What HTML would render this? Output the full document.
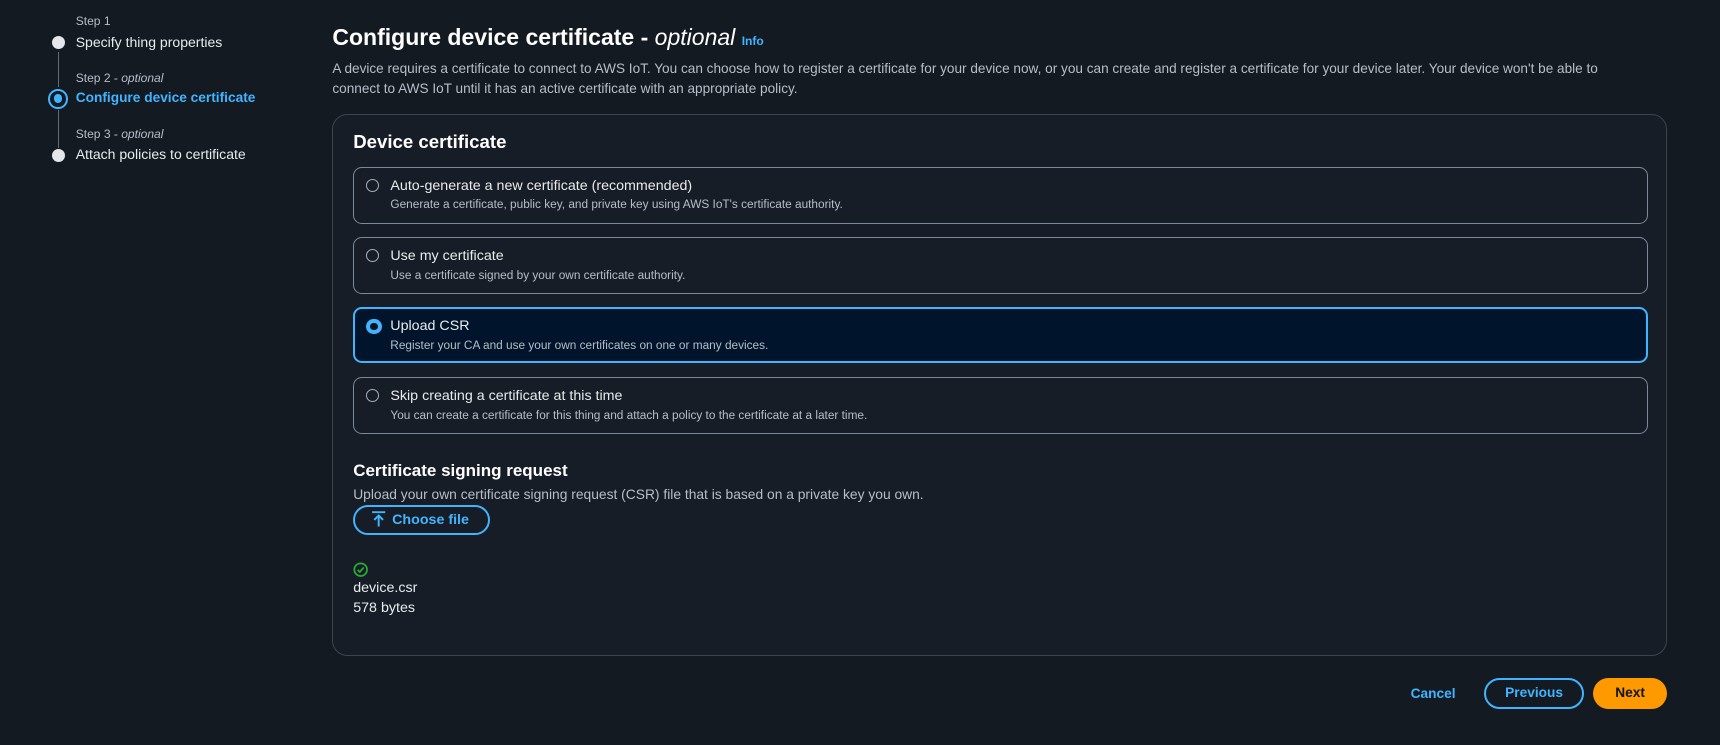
<!DOCTYPE html>
<html><head><meta charset="utf-8"><style>
html,body{margin:0;padding:0;background:#131a22;}
body{width:1720px;height:745px;overflow:hidden;font-family:"Liberation Sans",sans-serif;}
#w{zoom:1.09694;width:1568px;height:679px;position:relative;color:#dfe3e8;}
.a{position:absolute;white-space:nowrap;}
.dot{position:absolute;width:12px;height:12px;border-radius:50%;background:#e4e6ea;}
.line{position:absolute;left:52.5px;width:1.5px;background:#5f6b7a;}
.sl{font-size:11px;color:#b6bec9;}
.st{font-size:12.8px;color:#e9ebed;}
.card{position:absolute;left:322px;width:1180px;border:1px solid #7d8998;border-radius:8px;box-sizing:border-box;}
.card .r{position:absolute;left:11px;top:10px;width:12px;height:12px;border:1.5px solid #a6b0bc;border-radius:50%;box-sizing:border-box;}
.card .t{position:absolute;left:33px;top:9px;font-size:13px;color:#e9ebed;}
.card .d{position:absolute;left:33px;top:27px;font-size:10.8px;color:#b6bec9;}
.btn{position:absolute;border:2px solid #42b4ff;border-radius:16px;box-sizing:border-box;color:#42b4ff;font-weight:bold;font-size:13px;text-align:center;}
</style></head><body><div id="w">
<div class="a sl" style="left:69px;top:13px">Step 1</div>
<div class="dot" style="left:47px;top:33px"></div>
<div class="a st" style="left:69px;top:31px">Specify thing properties</div>
<div class="line" style="top:47px;height:32px"></div>
<div class="a sl" style="left:69px;top:65px">Step 2 - <i>optional</i></div>
<div class="a" style="left:44px;top:81px;width:18px;height:18px;border-radius:50%;border:2px solid #42b4ff;box-sizing:border-box"><div style="position:absolute;left:3px;top:3px;width:8px;height:8px;border-radius:50%;background:#42b4ff"></div></div>
<div class="a st" style="left:69px;top:82px;color:#42b4ff;font-weight:bold;font-size:12.5px">Configure device certificate</div>
<div class="line" style="top:100px;height:35px"></div>
<div class="a sl" style="left:69px;top:116px">Step 3 - <i>optional</i></div>
<div class="dot" style="left:47px;top:136px"></div>
<div class="a st" style="left:69px;top:133px">Attach policies to certificate</div>

<div class="a" style="left:303px;top:22px;font-size:21px;font-weight:bold;color:#fff">Configure device certificate - <i style="font-weight:normal">optional</i> <span style="font-size:11px;color:#42b4ff;font-weight:bold">Info</span></div>
<div class="a" style="left:303px;top:54px;font-size:12.4px;color:#b6bec9;line-height:18px;white-space:normal;width:1200px">A device requires a certificate to connect to AWS IoT. You can choose how to register a certificate for your device now, or you can create and register a certificate for your device later. Your device won't be able to connect to AWS IoT until it has an active certificate with an appropriate policy.</div>

<div class="a" style="left:303px;top:104px;width:1217px;height:494px;background:#171d27;border:1px solid #3c4450;border-radius:14px;box-sizing:border-box"></div>
<div class="a" style="left:322px;top:119px;font-size:17px;font-weight:bold;color:#fff">Device certificate</div>
<div class="card" style="top:152px;height:52px"><div class="r"></div><div class="t">Auto-generate a new certificate (recommended)</div><div class="d">Generate a certificate, public key, and private key using AWS IoT's certificate authority.</div></div>
<div class="card" style="top:216px;height:52px"><div class="r"></div><div class="t">Use my certificate</div><div class="d">Use a certificate signed by your own certificate authority.</div></div>
<div class="card" style="top:280px;height:51px;border:2px solid #42b4ff;background:#00142b"><div class="r" style="border:4px solid #42b4ff;background:#0f141a;left:10px;top:9px;width:14px;height:14px"></div><div class="t" style="top:8px;left:32px">Upload CSR</div><div class="d" style="top:26px;left:32px">Register your CA and use your own certificates on one or many devices.</div></div>
<div class="card" style="top:344px;height:52px"><div class="r"></div><div class="t">Skip creating a certificate at this time</div><div class="d">You can create a certificate for this thing and attach a policy to the certificate at a later time.</div></div>

<div class="a" style="left:322px;top:420px;font-size:15.5px;font-weight:bold;color:#fff">Certificate signing request</div>
<div class="a" style="left:322px;top:443px;font-size:12.6px;color:#b6bec9">Upload your own certificate signing request (CSR) file that is based on a private key you own.</div>
<div class="btn" style="left:322px;top:460px;width:125px;height:28px;line-height:24px;padding-left:16px">Choose file</div>
<svg class="a" style="left:338px;top:465px" width="14" height="16" viewBox="0 0 14 16"><path d="M1 2H13M7 15V5M3 9L7 5L11 9" stroke="#42b4ff" stroke-width="1.8" fill="none"/></svg>
<svg class="a" style="left:322px;top:512px" width="14" height="14" viewBox="0 0 14 14"><circle cx="7" cy="7" r="5.8" stroke="#29ad32" stroke-width="1.6" fill="none"/><path d="M4.2 7.2L6.2 9.1L9.8 5" stroke="#29ad32" stroke-width="1.6" fill="none"/></svg>
<div class="a" style="left:322px;top:529px;font-size:13px;color:#e9ebed">device.csr</div>
<div class="a" style="left:322px;top:547px;font-size:13px;color:#e9ebed">578 bytes</div>

<div class="a" style="left:1286px;top:625px;font-size:12.5px;font-weight:bold;color:#42b4ff">Cancel</div>
<div class="btn" style="left:1353px;top:618px;width:91px;height:28px;line-height:24px;font-size:12.5px">Previous</div>
<div class="btn" style="left:1452px;top:618px;width:68px;height:28px;line-height:28px;border:none;background:#ff9900;color:#0f141a;font-size:12.5px">Next</div>
</div></body></html>
